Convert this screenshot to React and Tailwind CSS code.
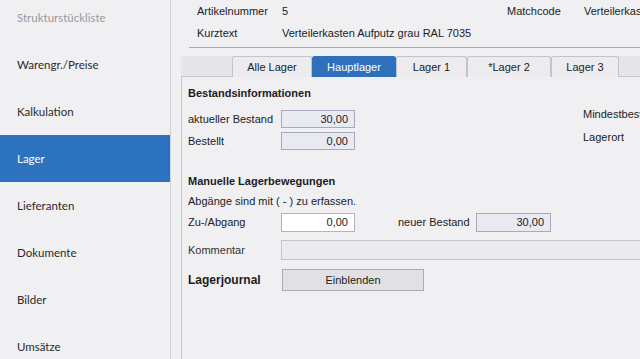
import React from 'react';

const navItems = [
    { label: 'Strukturstückliste', muted: true },
    { label: 'Warengr./Preise' },
    { label: 'Kalkulation' },
    { label: 'Lager', active: true },
    { label: 'Lieferanten' },
    { label: 'Dokumente' },
    { label: 'Bilder' },
    { label: 'Umsätze' },
];

const tabs = [
    { label: 'Alle Lager', w: 'w-[80px]' },
    { label: 'Hauptlager', w: 'w-[84px]', active: true },
    { label: 'Lager 1', w: 'w-[71px]' },
    { label: '*Lager 2', w: 'w-[84px]' },
    { label: 'Lager 3', w: 'w-[68px]' },
];

const Sidebar = () => (
    <nav className="w-[171px] shrink-0 bg-[#f0f0f2] border-r border-[#d2d2d6] font-['Lato',sans-serif] text-[11.5px]">
        <ul className="-mt-[6px]">
            {navItems.map((item) => (
                <li
                    key={item.label}
                    className={`h-[47px] flex items-center pl-[17px] ${
                        item.active ? 'bg-[#2d72be] text-white' : item.muted ? 'text-[#9a9a9e]' : 'text-[#2a2a2e]'
                    }`}
                >
                    {item.label}
                </li>
            ))}
        </ul>
    </nav>
);

const NumBox = ({ value, readOnly = true, className = 'w-[74px] h-[18px]' }) => (
    <div
        className={`${className} shrink-0 flex items-center justify-end pr-[6px] border ${
            readOnly ? 'bg-[#e9e9f2] border-[#a7a9bf]' : 'bg-white border-[#b4b4b8]'
        }`}
    >
        {value}
    </div>
);

const Header = () => (
    <div className="pl-[16px] pt-[3px]">
        <div className="grid grid-cols-[85px_225px_77px_1fr] h-[16px] items-center whitespace-nowrap">
            <span>Artikelnummer</span>
            <span>5</span>
            <span>Matchcode</span>
            <span>Verteilerkasten Aufputz</span>
        </div>
        <div className="grid grid-cols-[85px_1fr] h-[16px] mt-[6px] items-center whitespace-nowrap">
            <span>Kurztext</span>
            <span>Verteilerkasten Aufputz grau RAL 7035</span>
        </div>
        <div className="ml-[-8px] mt-[6px] h-px bg-[#a9a9ad]"></div>
    </div>
);

const TabStrip = () => (
    <div className="mt-[8px] h-[21px] flex items-end bg-[#e6e6e8] border-b border-[#c9c9cc] pl-[51px]">
        {tabs.map((t) => (
            <div
                key={t.label}
                className={`${t.w} h-[21px] -mb-px flex items-center justify-center rounded-t-[3px] border border-b-0 ${
                    t.active
                        ? 'bg-[#2e70bb] border-[#2e70bb] text-white'
                        : 'bg-[#ececee] border-[#c4c4c8] text-[#222]'
                }`}
            >
                {t.label}
            </div>
        ))}
    </div>
);

const StockPanel = () => (
    <div className="flex-1 border-l border-[#c7c7cb] bg-[#f0eff2] pl-[6px] pt-[8px]">
        <h2 className="h-[16px] flex items-center font-bold">Bestandsinformationen</h2>

        <div className="flex items-start mt-[5px]">
            <div className="w-[167px] shrink-0 pt-[4px] flex flex-col gap-[4px]">
                <div className="flex items-center">
                    <span className="w-[93px] shrink-0">aktueller Bestand</span>
                    <NumBox value="30,00" />
                </div>
                <div className="flex items-center">
                    <span className="w-[93px] shrink-0">Bestellt</span>
                    <NumBox value="0,00" />
                </div>
            </div>
            <div className="ml-[228px] flex flex-col gap-[7px] whitespace-nowrap">
                <span className="h-[16px] flex items-center">Mindestbestand</span>
                <span className="h-[16px] flex items-center">Lagerort</span>
            </div>
        </div>

        <h2 className="h-[16px] mt-[23px] flex items-center font-bold">Manuelle Lagerbewegungen</h2>
        <p className="h-[16px] mt-[4px] flex items-center">Abgänge sind mit ( - ) zu erfassen.</p>

        <div className="flex items-center mt-[4px] h-[19px]">
            <span className="w-[93px] shrink-0">Zu-/Abgang</span>
            <NumBox value="0,00" readOnly={false} className="w-[74px] h-[19px]" />
            <span className="ml-[43px] w-[78px] shrink-0 whitespace-nowrap">neuer Bestand</span>
            <NumBox value="30,00" className="w-[75px] h-[19px]" />
        </div>

        <div className="flex items-center mt-[8px] h-[20px]">
            <span className="w-[93px] shrink-0 text-[#333]">Kommentar</span>
            <div className="w-[400px] shrink-0 h-[20px] bg-[#ebebed] border border-r-0 border-[#c6c6ca]"></div>
        </div>

        <div className="flex items-center mt-[9px]">
            <span className="w-[94px] shrink-0 font-bold text-[12px]">Lagerjournal</span>
            <button className="w-[142px] h-[22px] bg-[#e1e1e3] border border-[#adadb0] text-[#222]">
                Einblenden
            </button>
        </div>
    </div>
);

export default function App() {
    return (
        <div className="w-[640px] h-[359px] overflow-hidden flex bg-[#f0eff2] text-[#1c1c1e]">
            <Sidebar />
            <main className="flex-1 min-w-0 flex flex-col pl-[10px] font-['Liberation_Sans',Arial,sans-serif] text-[11px]">
                <Header />
                <TabStrip />
                <StockPanel />
            </main>
        </div>
    );
}
